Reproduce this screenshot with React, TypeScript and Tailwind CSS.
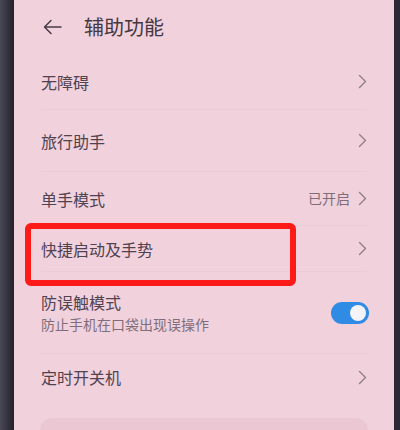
import React from 'react'

const font = { fontFamily: '"Noto Sans CJK SC", "Noto Sans", sans-serif' }

function Chevron() {
  return (
    <svg width="9" height="15" viewBox="0 0 9 15" className="shrink-0">
      <polyline points="1.5,1.5 7.5,7.5 1.5,13.5" fill="none" stroke="#8f7e89" strokeWidth="1.4" strokeLinecap="round" strokeLinejoin="round" />
    </svg>
  )
}

function Row({ label, value, h }: { label: string; value?: string; h: string }) {
  return (
    <div className={`flex items-center justify-between border-b border-[#ebcbd6] ${h}`}>
      <span className="text-[16px] text-[#514250]">{label}</span>
      <div className="flex items-center gap-[8px]">
        {value && <span className="text-[14px] text-[#7f6e79]">{value}</span>}
        <Chevron />
      </div>
    </div>
  )
}

export default function App() {
  return (
    <div className="relative flex h-[430px] w-[400px] overflow-hidden bg-[#2a2935]" style={font}>
      <div className="w-[14px] shrink-0 bg-gradient-to-r from-[#4a4856] to-[#23222e]" />
      <div className="flex flex-1 flex-col bg-[#f0d1dc]">
        <div className="flex h-[54px] items-center gap-[22px] pl-[29px]">
          <svg width="19" height="16" viewBox="0 0 19 16">
            <path d="M18 8H2M8 1.5L1.5 8 8 14.5" fill="none" stroke="#4a3b46" strokeWidth="1.5" strokeLinecap="round" strokeLinejoin="round" />
          </svg>
          <span className="text-[20px] text-[#45373f]">辅助功能</span>
        </div>
        <div className="px-[27px]">
          <Row label="无障碍" h="h-[56px]" />
          <Row label="旅行助手" h="h-[62px]" />
          <Row label="单手模式" value="已开启" h="h-[54px]" />
          <Row label="快捷启动及手势" h="h-[46px]" />
          <div className="flex h-[82px] items-center justify-between border-b border-[#ebcbd6]">
            <div className="flex flex-col">
              <span className="text-[16px] leading-[22px] text-[#514250]">防误触模式</span>
              <span className="text-[14px] leading-[22px] text-[#7f6e79]">防止手机在口袋出现误操作</span>
            </div>
            <div className="mr-[-2px] flex h-[22px] w-[38px] items-center justify-end rounded-full bg-[#2f8be4] pr-[3px]">
              <div className="h-[16px] w-[16px] rounded-full bg-[#f4f4f8]" />
            </div>
          </div>
          <div className="flex h-[46px] items-center justify-between">
            <span className="text-[16px] text-[#514250]">定时开关机</span>
            <Chevron />
          </div>
        </div>
        <div className="mx-[26px] mt-[18px] flex-1 rounded-t-[12px] bg-[#eac7d3]" />
      </div>
      <div className="w-[6px] shrink-0 bg-[#2a2935]" />
      <div className="absolute left-[25px] top-[223px] h-[63px] w-[271px] rounded-[6px] border-[6px] border-[#ff1a1a]" />
    </div>
  )
}
